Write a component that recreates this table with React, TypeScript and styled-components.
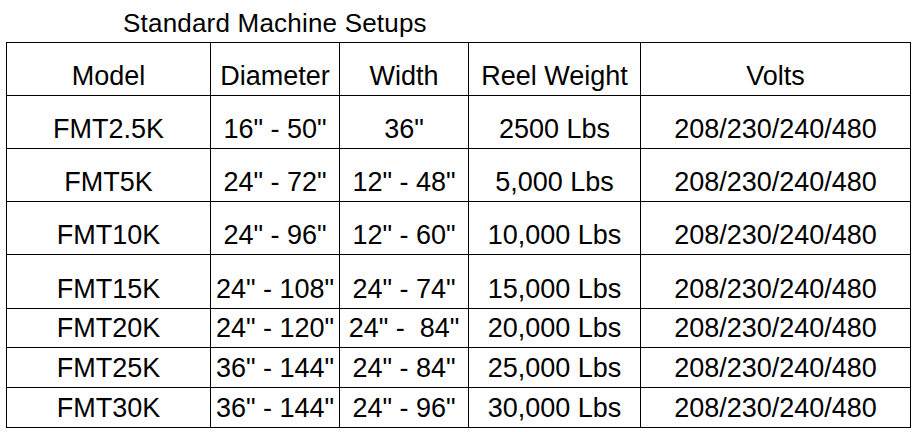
import { FC } from 'react';
import styled, { createGlobalStyle } from 'styled-components';

const GlobalStyle = createGlobalStyle`
  html, body {
    margin: 0;
    padding: 0;
    background: #fff;
  }
  body {
    font-family: 'Liberation Sans', Arial, sans-serif;
    color: #000;
  }
`;

const Page = styled.div`
  padding: 8px 0 0 6px;
`;

const Title = styled.h1`
  margin: 0 0 4px 117px;
  font-size: 26px;
  line-height: 30px;
  font-weight: 400;
  letter-spacing: 0.2px;
`;

const Table = styled.table`
  border-collapse: collapse;
  table-layout: fixed;
  width: 905px;
`;

const Cell = styled.td<{ $h: number }>`
  height: ${p => p.$h}px;
  padding: 0 0 3px;
  border: 1.3px solid #000;
  text-align: center;
  vertical-align: bottom;
  font-size: 27px;
  font-weight: 400;
  line-height: 32px;
  white-space: pre;
  box-sizing: border-box;
`;

const widths = [204, 129, 129, 172, 270];

const header = ['Model', 'Diameter', 'Width', 'Reel Weight', 'Volts'];

const rows: { h: number; cells: string[] }[] = [
  { h: 53, cells: ['FMT2.5K', '16" - 50"', '36"', '2500 Lbs', '208/230/240/480'] },
  { h: 53, cells: ['FMT5K', '24" - 72"', '12" - 48"', '5,000 Lbs', '208/230/240/480'] },
  { h: 53, cells: ['FMT10K', '24" - 96"', '12" - 60"', '10,000 Lbs', '208/230/240/480'] },
  { h: 54, cells: ['FMT15K', '24" - 108"', '24" - 74"', '15,000 Lbs', '208/230/240/480'] },
  { h: 39, cells: ['FMT20K', '24" - 120"', '24" -  84"', '20,000 Lbs', '208/230/240/480'] },
  { h: 40, cells: ['FMT25K', '36" - 144"', '24" - 84"', '25,000 Lbs', '208/230/240/480'] },
  { h: 40, cells: ['FMT30K', '36" - 144"', '24" - 96"', '30,000 Lbs', '208/230/240/480'] },
];

const App: FC = () => {
  return (
    <>
      <GlobalStyle />
      <Page>
        <Title>Standard Machine Setups</Title>
        <Table>
          <colgroup>
            {widths.map((w, i) => (
              <col key={i} style={{ width: w }} />
            ))}
          </colgroup>
          <tbody>
            <tr>
              {header.map(h => (
                <Cell as="th" key={h} $h={53}>
                  {h}
                </Cell>
              ))}
            </tr>
            {rows.map(row => (
              <tr key={row.cells[0]}>
                {row.cells.map((c, i) => (
                  <Cell key={i} $h={row.h}>
                    {c}
                  </Cell>
                ))}
              </tr>
            ))}
          </tbody>
        </Table>
      </Page>
    </>
  );
};

export default App;
